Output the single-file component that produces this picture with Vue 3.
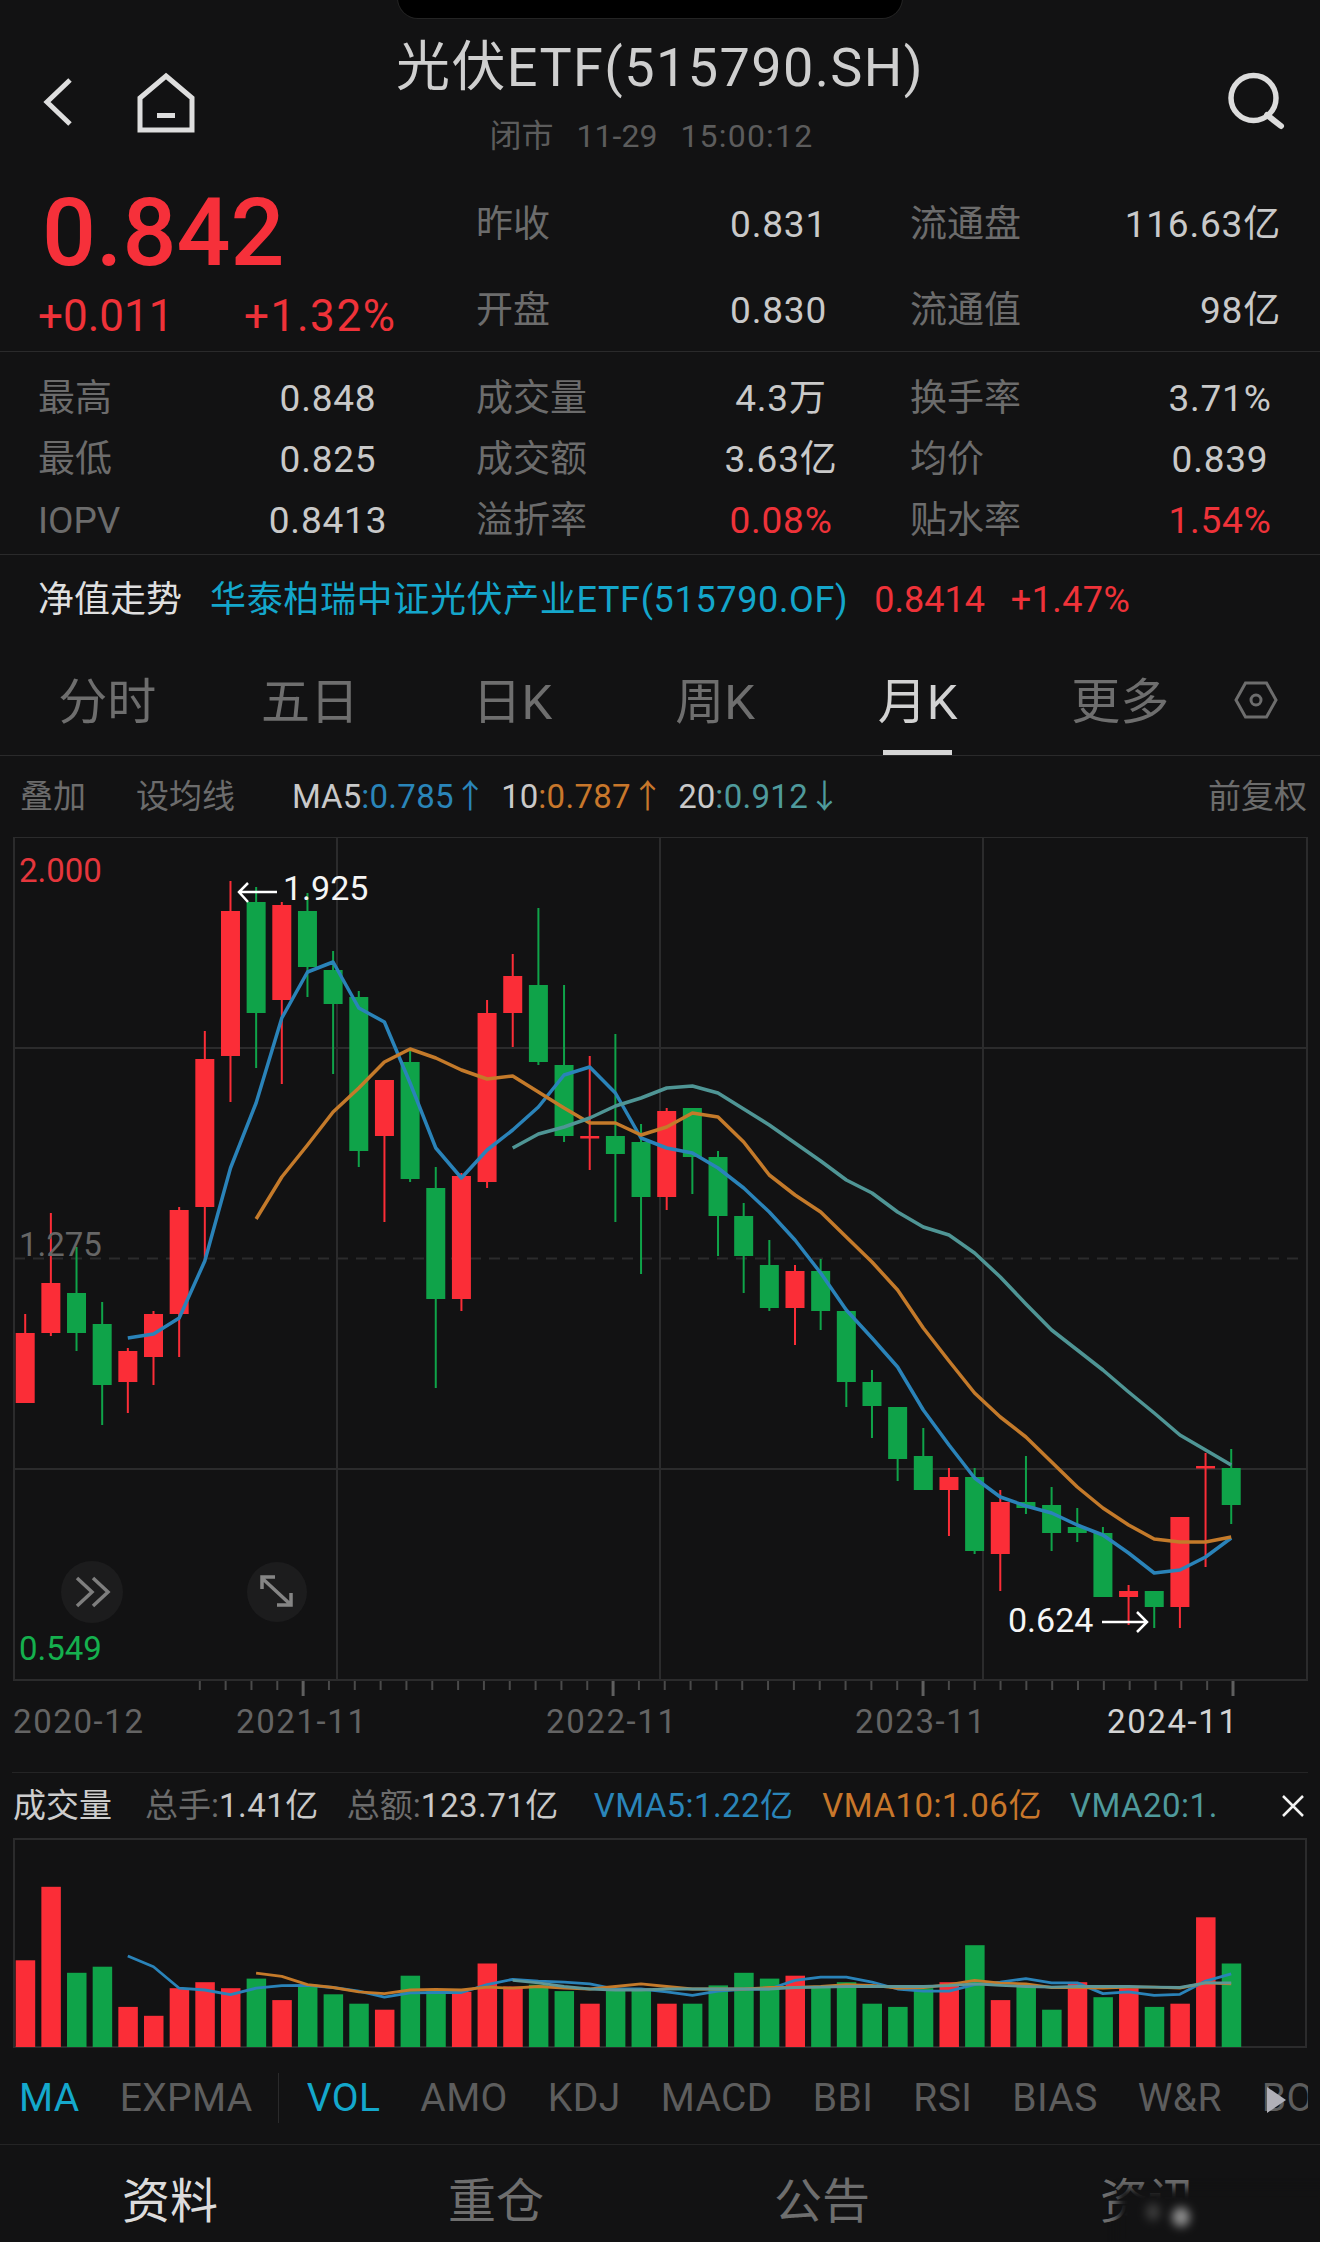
<template>
  <div class="page">
    <!-- 顶部挖孔 -->
    <div class="notch"></div>

    <!-- 1. 标题栏 -->
    <header class="nav">
      <div class="nav-left">
        <svg class="back-icon" width="32" height="54" viewBox="0 0 32 54" fill="none">
          <path d="M28 5 L5 27 L28 49" stroke="#dedede" stroke-width="5" />
        </svg>
        <svg class="home-icon" width="60" height="64" viewBox="0 0 60 64" fill="none">
          <path d="M30 6 L56 28 V60 H4 V28 Z" stroke="#dedede" stroke-width="5" />
          <rect x="21" y="43" width="18" height="5" fill="#dedede" />
        </svg>
      </div>
      <div class="nav-title">
        <div class="title">光伏ETF(515790.SH)</div>
        <div class="subtitle">
          <span>闭市</span>
          <span>11-29</span>
          <span class="sub-time">15:00:12</span>
        </div>
      </div>
      <div class="nav-right">
        <svg width="60" height="64" viewBox="0 0 60 64" fill="none">
          <circle cx="25.5" cy="28" r="22.5" stroke="#dcdcdc" stroke-width="5.5" />
          <path d="M39 45 L53 56" stroke="#dcdcdc" stroke-width="6" stroke-linecap="round" />
        </svg>
      </div>
    </header>

    <!-- 2. 报价 -->
    <section class="quote">
      <div class="price-block">
        <div class="price">0.842</div>
        <div class="change">
          <span class="change-abs">+0.011</span>
          <span class="change-pct">+1.32%</span>
        </div>
      </div>
      <div class="quote-grid">
        <div v-for="item in quoteItems" :key="item.label" class="quote-cell">
          <span class="label">{{ item.label }}</span>
          <span class="value num">{{ item.value }}</span>
        </div>
      </div>
    </section>

    <section class="stats">
      <div v-for="(row, r) in statRows" :key="r" class="stat-row">
        <div v-for="cell in row" :key="cell.label" class="stat-group">
          <span class="label stat-label">{{ cell.label }}</span>
          <span class="value num stat-value" :class="{ red: cell.red }">{{ cell.value }}</span>
        </div>
      </div>
    </section>

    <!-- 净值走势 -->
    <section class="nav-value">
      <span class="nv-title">净值走势</span>
      <span class="nv-name">华泰柏瑞中证光伏产业ETF(515790.OF)</span>
      <span class="nv-price">0.8414</span>
      <span class="nv-pct">+1.47%</span>
    </section>

    <!-- 3. 周期 Tab -->
    <nav class="tabs">
      <div v-for="tab in tabs" :key="tab" class="tab" :class="{ active: tab === '月K' }">
        {{ tab }}
        <i v-if="tab === '月K'" class="tab-bar"></i>
      </div>
      <svg class="hex-icon" width="44" height="38" viewBox="0 0 44 38" fill="none">
        <path d="M11.5 2 H32.5 L42 19 L32.5 36 H11.5 L2 19 Z" stroke="#6d6d6d" stroke-width="3" />
        <circle cx="22" cy="19" r="5" stroke="#6d6d6d" stroke-width="3" />
      </svg>
    </nav>

    <!-- 均线图例 -->
    <div class="legend">
      <span class="label lg-a">叠加</span>
      <span class="label lg-b">设均线</span>
      <span class="lg-name lg-c">MA5</span><span class="ma5 lg-val">:0.785↑</span>
      <span class="lg-name lg-d">10</span><span class="ma10 lg-val">:0.787↑</span>
      <span class="lg-name lg-d">20</span><span class="ma20 lg-val">:0.912↓</span>
      <span class="label lg-e">前复权</span>
    </div>

    <!-- 4. K 线 -->
    <section class="kline">
      <svg class="kline-svg" width="1320" height="860" viewBox="0 837 1320 860">
        <g stroke="#2b2b2c" stroke-width="2" fill="none">
          <rect x="14" y="837" width="1293" height="843" />
          <path d="M14 1048 H1307 M14 1469 H1307 M337 837 V1680 M660 837 V1680 M983 837 V1680" />
          <path d="M14 1258.5 H1307" stroke-dasharray="11 8" />
        </g>
        <g v-for="t in ticks" :key="t.x" :stroke="t.major ? '#5f5f5f' : '#4a4a4a'" :stroke-width="t.major ? 3 : 2">
          <line :x1="t.x" y1="1681" :x2="t.x" :y2="t.major ? 1696 : 1690" />
        </g>
        <g v-for="c in candles" :key="c.x" :fill="c.color">
          <rect :x="c.x - 1" :y="c.wickTop" width="2" :height="c.wickBottom - c.wickTop" />
          <rect :x="c.x - 9.5" :y="c.bodyTop" width="19" :height="c.bodyBottom - c.bodyTop" />
        </g>
        <polyline :points="ma5Points" class="ln" stroke="#2a83b9" />
        <polyline :points="ma10Points" class="ln" stroke="#c47a2a" />
        <polyline :points="ma20Points" class="ln" stroke="#4f9595" />

        <path d="M248 883 L239 892 L248 902 M239 892 H277" stroke="#fff" stroke-width="2.5" fill="none" />
        <path d="M1137 1612 L1147 1622 L1137 1632 M1102 1622 H1147" stroke="#fff" stroke-width="2.5" fill="none" />

        <circle cx="92" cy="1592" r="31" fill="#1c1c1d" />
        <path d="M77 1578 L92 1592 L77 1606 M93 1578 L108 1592 L93 1606" stroke="#7e7e7e" stroke-width="3.5" fill="none" />
        <circle cx="277" cy="1592" r="30" fill="#1c1c1d" />
        <path d="M263 1579 L290 1604 M262 1589 V1577 H275 M291 1593 V1605 H277" stroke="#858585" stroke-width="3.5" fill="none" />
      </svg>
      <span class="ax-label ax-high">2.000</span>
      <span class="ax-label ax-mid">1.275</span>
      <span class="ax-label ax-low">0.549</span>
      <span class="peak peak-high">1.925</span>
      <span class="peak peak-low">0.624</span>
    </section>

    <div class="dates">
      <span
        v-for="d in dates"
        :key="d.text"
        class="date"
        :class="{ now: d.now }"
        :style="{ left: d.left + 'px' }"
      >{{ d.text }}</span>
    </div>

    <!-- 5. 成交量 -->
    <div class="vol-head">
      <span class="vol-title">成交量</span>
      <span class="label vol-a">总手:</span><span class="value vol-num">1.41亿</span>
      <span class="label vol-b">总额:</span><span class="value vol-num">123.71亿</span>
      <span class="ma5 vol-c">VMA5:1.22亿</span>
      <span class="ma10 vol-d">VMA10:1.06亿</span>
      <span class="ma20 vol-e">VMA20:1.</span>
      <svg class="close-icon" width="22" height="22" viewBox="0 0 22 22">
        <path d="M1 1 L21 21 M21 1 L1 21" stroke="#f2f2f2" stroke-width="2.5" />
      </svg>
    </div>
    <svg class="vol-svg" width="1320" height="210" viewBox="0 1838 1320 210">
      <rect x="14" y="1839" width="1292" height="208" fill="none" stroke="#2b2b2c" stroke-width="2" />
      <rect
        v-for="b in volBars"
        :key="b.x"
        :x="b.x - 9.5"
        :y="b.y"
        width="19.5"
        :height="2047 - b.y"
        :fill="b.color"
      />
      <polyline :points="vma5Points" class="ln thin" stroke="#2a83b9" />
      <polyline :points="vma10Points" class="ln thin" stroke="#c47a2a" />
      <polyline :points="vma20Points" class="ln thin" stroke="#5f9798" />
    </svg>

    <!-- 指标 -->
    <div class="indicators">
      <template v-for="ind in indicators" :key="ind.name">
        <i v-if="ind.name === 'VOL'" class="ind-sep"></i>
        <span class="ind" :class="{ on: ind.on }">{{ ind.name }}</span>
      </template>
      <i class="ind-more"></i>
    </div>

    <!-- 底部 -->
    <footer class="bottom">
      <div v-for="(t, i) in bottomTabs" :key="t" class="bottom-tab" :class="{ active: i === 0 }">{{ t }}</div>
      <div class="mark">
        <i class="blob blob-a"></i>
        <i class="blob blob-b"></i>
      </div>
    </footer>
  </div>
</template>

<script setup>
const quoteItems = [
  { label: '昨收', value: '0.831' },
  { label: '流通盘', value: '116.63亿' },
  { label: '开盘', value: '0.830' },
  { label: '流通值', value: '98亿' }
];

const statRows = [
  [
    { label: '最高', value: '0.848' },
    { label: '成交量', value: '4.3万' },
    { label: '换手率', value: '3.71%' }
  ],
  [
    { label: '最低', value: '0.825' },
    { label: '成交额', value: '3.63亿' },
    { label: '均价', value: '0.839' }
  ],
  [
    { label: 'IOPV', value: '0.8413' },
    { label: '溢折率', value: '0.08%', red: true },
    { label: '贴水率', value: '1.54%', red: true }
  ]
];

const tabs = ['分时', '五日', '日K', '周K', '月K', '更多'];
const bottomTabs = ['资料', '重仓', '公告', '资讯'];

const indicators = ['MA', 'EXPMA', 'VOL', 'AMO', 'KDJ', 'MACD', 'BBI', 'RSI', 'BIAS', 'W&R', 'BOLL'].map((name) => ({
  name,
  on: name === 'MA' || name === 'VOL'
}));

const dates = [
  { text: '2020-12', left: 13 },
  { text: '2021-11', left: 236 },
  { text: '2022-11', left: 546 },
  { text: '2023-11', left: 855 },
  { text: '2024-11', left: 1107, now: true }
];

const RED = '#fb2d37';
const GREEN = '#0fa349';
const candleX = (i) => 25.2 + i * 25.66;

// 每根 K 线: [涨跌, 上影, 实体顶, 实体底, 下影]，单位是页面 y 像素
const raw = [
  ['r', 1314, 1333, 1403, 1403], ['r', 1213, 1283, 1333, 1336], ['g', 1247, 1293, 1333, 1351],
  ['g', 1302, 1324, 1385, 1425], ['r', 1348, 1351, 1382, 1413], ['r', 1311, 1314, 1357, 1385],
  ['r', 1207, 1210, 1314, 1357], ['r', 1031, 1059, 1207, 1262], ['r', 881, 911, 1056, 1102],
  ['g', 887, 902, 1013, 1068], ['r', 902, 905, 1000, 1084], ['g', 893, 911, 967, 997],
  ['g', 951, 970, 1004, 1074], ['g', 991, 997, 1151, 1167], ['r', 1080, 1080, 1136, 1222],
  ['g', 1050, 1062, 1179, 1182], ['g', 1167, 1188, 1299, 1388], ['r', 1173, 1176, 1299, 1311],
  ['r', 1000, 1013, 1182, 1188], ['r', 954, 976, 1013, 1047], ['g', 908, 985, 1062, 1065],
  ['g', 985, 1065, 1136, 1142], ['r', 1056, 1136, 1138.5, 1170], ['g', 1034, 1136, 1154, 1222],
  ['g', 1124, 1142, 1197, 1274], ['r', 1108, 1111, 1197, 1210], ['g', 1108, 1108, 1157, 1194],
  ['g', 1151, 1157, 1216, 1256], ['g', 1203, 1216, 1256, 1293], ['g', 1240, 1265, 1308, 1311],
  ['r', 1265, 1271, 1308, 1345], ['g', 1259, 1271, 1311, 1330], ['g', 1311, 1311, 1382, 1407],
  ['g', 1370, 1382, 1406, 1438], ['g', 1407, 1407, 1459, 1481], ['g', 1428, 1456, 1490, 1490],
  ['r', 1468, 1477, 1490, 1536], ['g', 1468, 1477, 1551, 1554], ['r', 1490, 1502, 1554, 1591],
  ['g', 1456, 1502, 1508, 1514], ['g', 1487, 1505, 1533, 1551], ['g', 1508, 1527, 1533, 1542],
  ['g', 1527, 1533, 1597, 1597], ['r', 1585, 1591, 1597, 1625], ['g', 1591, 1591, 1607, 1628],
  ['r', 1517, 1517, 1607, 1628], ['r', 1453, 1466, 1468.5, 1567], ['g', 1449, 1468, 1505, 1524]
];

const candles = raw.map((c, i) => ({
  x: candleX(i),
  color: c[0] === 'r' ? RED : GREEN,
  wickTop: c[1],
  bodyTop: c[2],
  bodyBottom: c[3],
  wickBottom: c[4]
}));

const toPoints = (start, ys) => ys.map((y, i) => `${candleX(start + i).toFixed(1)},${y}`).join(' ');

const ma5Points = toPoints(4, [
  1338, 1334, 1318, 1261, 1168, 1103, 1018, 972, 962, 1008, 1022, 1083, 1148, 1178, 1150, 1130, 1107, 1075, 1067,
  1093, 1138, 1148, 1153, 1168, 1188, 1212, 1240, 1273, 1310, 1338, 1367, 1410, 1445, 1478, 1497, 1506, 1513, 1525,
  1535, 1553, 1573, 1570, 1557, 1538
]);
const ma10Points = toPoints(9, [
  1219, 1177, 1145, 1112, 1088, 1062, 1049, 1058, 1070, 1079, 1076, 1092, 1108, 1123, 1123, 1135, 1127, 1113, 1117,
  1142, 1175, 1195, 1212, 1237, 1262, 1290, 1328, 1361, 1393, 1417, 1437, 1462, 1487, 1508, 1525, 1539, 1542, 1542,
  1537
]);
const ma20Points = toPoints(19, [
  1148, 1134, 1127, 1118, 1106, 1098, 1088, 1086, 1093, 1109, 1125, 1143, 1161, 1180, 1193, 1212, 1227, 1235, 1253,
  1277, 1304, 1330, 1350, 1370, 1392, 1413, 1435, 1450, 1465
]);

const ticks = Array.from({ length: 41 }, (_, i) => ({
  x: 199.8 + i * 25.83,
  major: (i - 4) % 12 === 0
}));

// 成交量柱: [涨跌, 顶部]，顶部量自放大图，换算见 volY
const volY = (v) => +(1680 + v / 2.79).toFixed(1);
const volRaw = [
  ['r', 782], ['r', 577], ['g', 817], ['g', 800], ['r', 912], ['r', 937], ['r', 860], ['r', 843], ['r', 860],
  ['g', 833], ['r', 893], ['g', 850], ['g', 877], ['g', 903], ['r', 920], ['g', 825], ['g', 868], ['r', 870],
  ['r', 791], ['r', 855], ['g', 850], ['g', 868], ['r', 903], ['g', 860], ['g', 860], ['r', 903], ['g', 903],
  ['g', 852], ['g', 817], ['g', 833], ['r', 825], ['g', 855], ['g', 843], ['g', 903], ['g', 912], ['g', 860],
  ['r', 843], ['g', 740], ['r', 893], ['g', 850], ['g', 920], ['r', 843], ['g', 885], ['r', 860], ['g', 912],
  ['r', 903], ['r', 662], ['g', 791]
];
const volBars = volRaw.map((b, i) => ({
  x: candleX(i),
  y: volY(b[1]),
  color: b[0] === 'r' ? RED : GREEN
}));

const vma5Points = toPoints(4, [
  770, 800, 860, 865, 878, 860, 853, 852, 858, 868, 885, 873, 872, 872, 850, 835, 840, 843, 848, 862, 862, 870, 880,
  868, 863, 862, 838, 829, 829, 843, 862, 868, 868, 850, 843, 833, 845, 845, 875, 870, 880, 877, 840, 820
].map(volY));
const vma10Points = toPoints(9, [
  818, 827, 850, 858, 870, 875, 865, 863, 865, 857, 860, 855, 860, 862, 855, 848, 855, 862, 862, 862, 858, 858, 855,
  850, 852, 860, 858, 850, 838, 846, 848, 858, 858, 860, 857, 857, 860, 845, 848
].map(volY));
const vma20Points = toPoints(19, [
  838, 845, 855, 862, 865, 865, 862, 862, 862, 862, 862, 858, 857, 855, 855, 855, 855, 853, 848, 852, 855, 857, 855,
  855, 855, 857, 858, 845, 845
].map(volY));
</script>

<style scoped>
.page {
  position: relative;
  width: 1320px;
  height: 2242px;
  overflow: hidden;
  background: #121213;
  color: #c9c9c9;
  font-family: Roboto, 'Noto Sans CJK SC', sans-serif;
  line-height: 1.2;
}
.notch {
  position: absolute;
  left: 397px;
  top: -2px;
  width: 504px;
  height: 20px;
  box-sizing: content-box;
  background: #000;
  border: 1px solid #242424;
  border-top: 0;
  border-radius: 0 0 34px 34px;
}
.label { color: #6c6c6c; }
.value { color: #c9c9c9; }
.num { font-size: 37px; letter-spacing: 0.8px; }
.red { color: #ef3239; }

/* 标题栏 */
.nav {
  display: grid;
  grid-template-columns: 1fr auto 1fr;
  height: 164px;
}
.nav-left {
  display: flex;
  align-items: center;
  gap: 62px;
  padding-left: 42px;
  height: 64px;
  margin-top: 70px;
}
.nav-title {
  text-align: center;
  padding-top: 37px;
}
.title {
  font-size: 54px;
  line-height: 62px;
  color: #cfcfcf;
  letter-spacing: 1.4px;
}
.subtitle {
  display: flex;
  justify-content: center;
  gap: 23px;
  font-size: 32px;
  line-height: 44px;
  margin-top: 15px;
  padding-right: 17px;
  color: #5c5c5c;
}
.sub-time { letter-spacing: 1.2px; }
.nav-right {
  display: flex;
  justify-content: flex-end;
  padding-right: 32px;
  margin-top: 70px;
}

/* 报价 */
.quote {
  display: flex;
  height: 187px;
  border-bottom: 1px solid #2a2a2b;
}
.price-block {
  width: 476px;
  padding-left: 38px;
  box-sizing: border-box;
}
.price {
  font-size: 95px;
  font-weight: 500;
  line-height: 110px;
  margin-top: 14px;
  padding-left: 4px;
  color: #f6303a;
}
.change {
  display: flex;
  height: 56px;
  align-items: center;
  font-size: 44px;
  color: #ef3239;
}
.change-abs { width: 206px; }
.change-pct { letter-spacing: 1.6px; }
.quote-grid {
  display: grid;
  grid-template-columns: 351px 371px;
  grid-auto-rows: 86px;
  column-gap: 83px;
  padding-top: 18px;
}
.quote-cell {
  display: flex;
  justify-content: space-between;
  align-items: center;
  font-size: 37px;
}

/* 明细 */
.stats {
  height: 203px;
  padding-top: 17px;
  box-sizing: border-box;
  border-bottom: 1px solid #2a2a2b;
}
.stat-row {
  display: flex;
  height: 61px;
  align-items: center;
  font-size: 37px;
}
.stat-group { display: flex; align-items: center; }
.stat-group:nth-child(1) { width: 476px; padding-left: 38px; box-sizing: border-box; }
.stat-group:nth-child(2) { width: 434px; }
.stat-group:nth-child(3) { width: 410px; }
.stat-value { text-align: center; }
.stat-group:nth-child(1) .stat-label { width: 180px; }
.stat-group:nth-child(1) .stat-value { width: 220px; }
.stat-group:nth-child(2) .stat-label { width: 176px; }
.stat-group:nth-child(2) .stat-value { width: 258px; }
.stat-group:nth-child(3) .stat-label { width: 220px; }
.stat-group:nth-child(3) .stat-value { width: 180px; }

/* 净值 */
.nav-value {
  display: flex;
  align-items: center;
  height: 76px;
  padding: 8px 0 0 38px;
  font-size: 36px;
}
.nv-title { color: #dfdfdf; width: 172px; }
.nv-name { color: #14a6cb; letter-spacing: 0.65px; }
.nv-price { color: #ef3239; margin-left: 26px; }
.nv-pct { color: #ef3239; margin-left: 26px; letter-spacing: 0.4px; }

/* 周期 Tab */
.tabs {
  display: flex;
  height: 116px;
  padding-left: 6px;
  border-bottom: 1px solid #2a2a2b;
}
.tab {
  position: relative;
  width: 202.6px;
  text-align: center;
  font-size: 49px;
  line-height: 127px;
  color: #6e6e6e;
}
.tab.active { color: #d2d2d2; }
.tab-bar {
  position: absolute;
  left: 67px;
  bottom: 0;
  width: 69px;
  height: 5px;
  background: #d6d6d6;
}
.hex-icon { margin: 42px 0 0 12px; }

/* 图例 */
.legend {
  position: relative;
  display: flex;
  align-items: center;
  height: 80px;
  padding-top: 1px;
  font-size: 33px;
}
.lg-a { margin-left: 20px; }
.lg-b { margin-left: 50px; }
.lg-name { color: #c9c9c9; }
.lg-val { letter-spacing: 0.3px; }
.lg-c { margin-left: 57px; }
.lg-d { margin-left: 14px; }
.lg-e { margin-left: auto; margin-right: 13px; }
.ma5 { color: #2a85b9; }
.ma10 { color: #c8772b; }
.ma20 { color: #4f9a9c; }

/* K 线 */
.kline {
  position: relative;
  height: 860px;
}
.kline-svg { display: block; }
.ln { fill: none; stroke-width: 3.5; stroke-linejoin: round; }
.ln.thin { stroke-width: 2.8; }
.ax-label,
.peak {
  position: absolute;
  font-size: 33px;
  line-height: 40px;
}
.ax-label { left: 19px; }
.ax-high { top: 14px; color: #e5363c; }
.ax-mid { top: 388px; color: #666; }
.ax-low { top: 792px; color: #15b04e; }
.peak { color: #f5f5f5; font-size: 34px; }
.peak-high { left: 283px; top: 31px; }
.peak-low { left: 1008px; top: 763px; }

.dates {
  position: relative;
  height: 75px;
  margin: 0 12px;
  border-bottom: 1px solid #242425;
}
.date {
  position: absolute;
  top: 0;
  margin-left: -12px;
  font-size: 33px;
  line-height: 50px;
  letter-spacing: 1.6px;
  color: #646464;
}
.date.now { color: #d4d4d4; }

/* 成交量 */
.vol-head {
  position: relative;
  display: flex;
  align-items: center;
  height: 65px;
  padding-left: 13px;
  font-size: 33px;
}
.vol-title { color: #cdcdcd; }
.vol-num { letter-spacing: 0.5px; }
.vol-a { margin-left: 33px; }
.vol-b { margin-left: 28px; }
.vol-c { margin-left: 35px; letter-spacing: 0.4px; }
.vol-d { margin-left: 29px; letter-spacing: 0.5px; }
.vol-e { margin-left: 28px; letter-spacing: 0.5px; }
.close-icon { position: absolute; left: 1282px; top: 22px; }
.vol-svg { display: block; }

/* 指标 */
.indicators {
  position: relative;
  display: flex;
  align-items: center;
  gap: 40px;
  width: 1308px;
  height: 96px;
  overflow: hidden;
  padding: 4px 0 0 19px;
  box-sizing: border-box;
  font-size: 39px;
  letter-spacing: 0.4px;
  white-space: nowrap;
  color: #5d5d5d;
}
.ind { flex-shrink: 0; }
.ind.on { color: #14a8cc; }
.ind-sep {
  flex-shrink: 0;
  width: 1px;
  height: 50px;
  margin: 0 -12px 0 -15px;
  background: #2a2a2b;
}
.ind-more {
  position: absolute;
  left: 1267px;
  top: 39px;
  border-left: 19px solid #b0b0b8;
  border-top: 13px solid transparent;
  border-bottom: 13px solid transparent;
}

/* 底部 */
.bottom {
  position: relative;
  display: flex;
  height: 97px;
  padding: 17px 0 0 7px;
  box-sizing: border-box;
  border-top: 1px solid #242425;
}
.bottom-tab {
  width: 326px;
  text-align: center;
  font-size: 48px;
  line-height: 80px;
  color: #6e6e6e;
}
.bottom-tab.active { color: #dcdcdc; }
.mark {
  position: absolute;
  left: 1118px;
  top: 44px;
  width: 210px;
  height: 60px;
  background: #121213;
  filter: blur(5px);
}
.blob {
  position: absolute;
  border-radius: 50%;
}
.blob-a {
  left: 54px;
  top: 18px;
  width: 18px;
  height: 20px;
  background: #8d8d8d;
}
.blob-b {
  left: 28px;
  top: 14px;
  width: 14px;
  height: 18px;
  background: #3d3d3d;
}
</style>

<style>
html,
body {
  margin: 0;
  background: #121213;
}
</style>
